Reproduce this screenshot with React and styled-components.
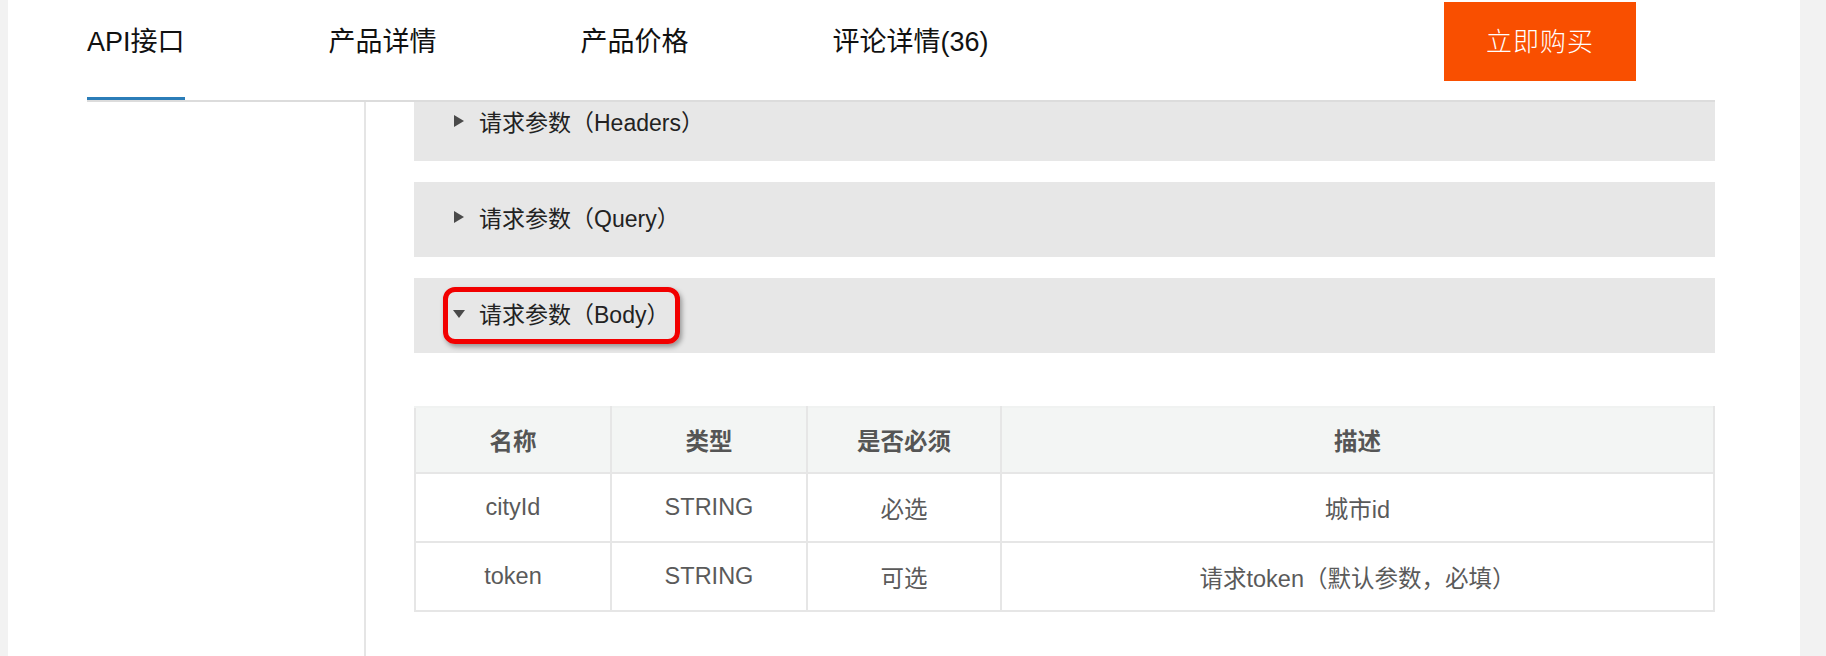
import React from "react";
import styled, { createGlobalStyle } from "styled-components";

const Global = createGlobalStyle`
  html, body { margin: 0; padding: 0; height: 100%; }
  body {
    background: #f2f2f2;
    font-family: "Liberation Sans", "Noto Sans CJK SC", sans-serif;
    overflow: hidden;
  }
  #root { height: 100%; }
`;

const Page = styled.div`
  margin: 0 26px 0 8px;
  background: #fff;
  height: 100%;
  display: flex;
  flex-direction: column;
`;

const Header = styled.div`
  margin-left: 79px;
  width: 1628px;
  height: 100px;
  border-bottom: 2px solid #dcdcdc;
  display: flex;
  align-items: flex-start;
`;

const Tabs = styled.div`
  display: flex;
  gap: 144px;
  height: 100px;
`;

const Tab = styled.div`
  box-sizing: border-box;
  height: 100px;
  padding-bottom: 19px;
  display: flex;
  align-items: center;
  font-size: 27px;
  color: #111;
  white-space: nowrap;
  border-bottom: 3px solid ${(p) => (p.$active ? "#2b7db8" : "transparent")};
`;

const BuyButton = styled.button`
  margin: 2px 79px 0 auto;
  width: 192px;
  height: 79px;
  border: none;
  background: #f94f00;
  color: #fff;
  font-family: "Liberation Sans", "Noto Sans CJK SC", sans-serif;
  font-weight: 300;
  font-size: 26px;
  letter-spacing: 1px;
  padding: 0 0 4px;
`;

const Body = styled.div`
  flex: 1;
  display: flex;
  min-height: 0;
`;

const Sidebar = styled.div`
  width: 356px;
  border-right: 2px solid #e5e5e5;
  flex-shrink: 0;
`;

const Content = styled.div`
  padding-left: 48px;
  width: 1301px;
  overflow: hidden;
`;

const PanelList = styled.div`
  display: flex;
  flex-direction: column;
  gap: 21px;
  margin-top: -16px;
`;

const Panel = styled.div`
  position: relative;
  box-sizing: border-box;
  height: 75px;
  padding-bottom: 5px;
  background: #e7e7e7;
  display: flex;
  align-items: center;
`;

const Caret = styled.span`
  width: 13px;
  margin-left: 38px;
  display: flex;
  justify-content: center;
  align-items: center;
  &::before {
    content: "";
    width: 0;
    height: 0;
    ${(p) =>
      p.$open
        ? `border-left: 6.5px solid transparent;
           border-right: 6.5px solid transparent;
           border-top: 8px solid #4a4a4a;
           margin-top: 2px;`
        : `border-top: 6px solid transparent;
           border-bottom: 6px solid transparent;
           border-left: 10px solid #4a4a4a;`}
  }
`;

const PanelTitle = styled.span`
  margin-left: 14px;
  font-size: 23px;
  color: #222;
`;

const Highlight = styled.div`
  position: absolute;
  left: 29px;
  top: 9px;
  width: 237px;
  height: 57px;
  box-sizing: border-box;
  border: 5px solid #f20000;
  border-radius: 12px;
  box-shadow: 2px 3px 5px rgba(0, 0, 0, 0.35);
  pointer-events: none;
`;

const Table = styled.table`
  margin-top: 53px;
  width: 1301px;
  border-collapse: collapse;
  table-layout: fixed;
  font-size: 23.5px;
`;

const Th = styled.th`
  height: 64px;
  padding: 0;
  background: #f3f5f4;
  color: #555;
  font-weight: bold;
  border: 2px solid #e6e6e6;
  border-top-color: #f0f2f1;
  text-align: center;
`;

const Td = styled.td`
  height: 67px;
  padding: 0;
  color: #5a5a5a;
  border: 2px solid #e6e6e6;
  text-align: center;
`;

const rows = [
  ["cityId", "STRING", "必选", "城市id"],
  ["token", "STRING", "可选", "请求token（默认参数，必填）"],
];

export default function App() {
  return (
    <>
      <Global />
      <Page lang="zh-CN">
        <Header>
          <Tabs>
            <Tab $active>API接口</Tab>
            <Tab>产品详情</Tab>
            <Tab>产品价格</Tab>
            <Tab>评论详情(36)</Tab>
          </Tabs>
          <BuyButton>立即购买</BuyButton>
        </Header>
        <Body>
          <Sidebar />
          <Content>
            <PanelList>
              <Panel>
                <Caret />
                <PanelTitle>请求参数（Headers）</PanelTitle>
              </Panel>
              <Panel>
                <Caret />
                <PanelTitle>请求参数（Query）</PanelTitle>
              </Panel>
              <Panel>
                <Caret $open />
                <PanelTitle>请求参数（Body）</PanelTitle>
                <Highlight />
              </Panel>
            </PanelList>
            <Table>
              <colgroup>
                <col style={{ width: 196 }} />
                <col style={{ width: 196 }} />
                <col style={{ width: 194 }} />
                <col />
              </colgroup>
              <thead>
                <tr>
                  <Th>名称</Th>
                  <Th>类型</Th>
                  <Th>是否必须</Th>
                  <Th>描述</Th>
                </tr>
              </thead>
              <tbody>
                {rows.map((r) => (
                  <tr key={r[0]}>
                    {r.map((c, i) => (
                      <Td key={i}>{c}</Td>
                    ))}
                  </tr>
                ))}
              </tbody>
            </Table>
          </Content>
        </Body>
      </Page>
    </>
  );
}
